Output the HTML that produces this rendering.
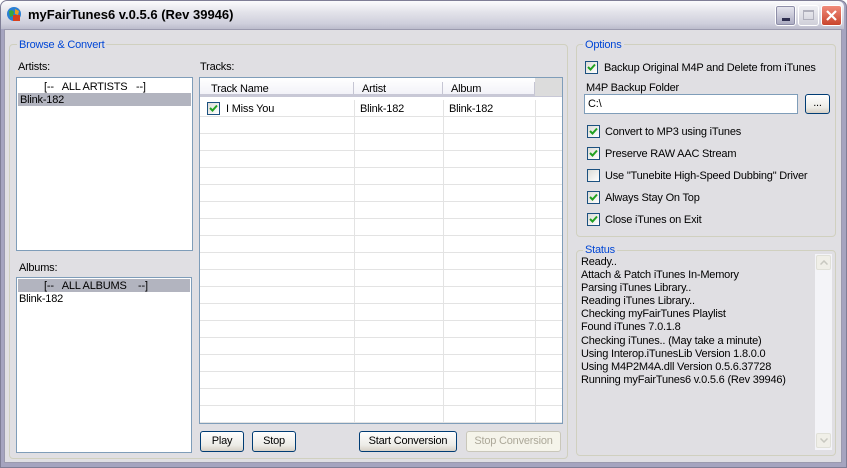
<!DOCTYPE html>
<html><head><meta charset="utf-8">
<style>
*{box-sizing:border-box;margin:0;padding:0}
body{width:847px;height:468px;overflow:hidden;background:#fff;font-family:"Liberation Sans",sans-serif;font-size:11px;letter-spacing:-0.2px;color:#000;position:relative}
.a{position:absolute}
#win{left:0;top:0;width:847px;height:468px;background:#a5a4bf;border-radius:7px 7px 0 0;border:1px solid #7f7e96}
#title{left:1px;top:1px;width:843px;height:28px;border-radius:6px 6px 0 0;background:linear-gradient(#fbfbfd,#e3e3ea 40%,#cfcfdc 80%,#bcbccc)}
#client{left:4px;top:29px;width:838px;height:434px;background:#e0dfe3;border:1px solid #9b9aae}
.grp{border:1px solid #d0d0bf;border-radius:4px;background:transparent}
.leg{background:#e0dfe3;color:#0046d5;padding:0 2px;line-height:12px}
.lb{background:#fff;border:1px solid #7f9db9}
.sel{background:#b2b4bf}
.btn{border:1px solid #003c74;border-radius:3px;background:linear-gradient(#fff,#ecebe6 70%,#d6d0c5);text-align:center;line-height:18px}
.cb{width:13px;height:13px;border:1px solid #1c5180;background:linear-gradient(135deg,#dcdcd7,#fff)}
.cb svg{position:absolute;left:1px;top:1px}
.t{white-space:nowrap;line-height:13px}
</style></head><body>
<div id="win" class="a"></div>
<div id="title" class="a"></div>
<svg class="a" style="left:6px;top:6px" width="16" height="16"><circle cx="8" cy="8" r="7" fill="#2a7fd4"/><path d="M3 5 Q6 3 8 6 L7 10 L4 11Z" fill="#3aa83a"/><path d="M9 3 L13 5 L12 9 L9 8Z" fill="#e8a020"/><rect x="7" y="9" width="7" height="6" fill="#d8401c"/></svg>
<div class="a t" style="left:28px;top:8px;font-weight:bold;font-size:13px;letter-spacing:0;color:#000">myFairTunes6 v.0.5.6 (Rev 39946)</div>
<div class="a" style="left:775px;top:5px;width:21px;height:21px;border:1px solid #fff;border-radius:3px;background:linear-gradient(#e8e8f0,#a9a9c0);box-shadow:inset 0 0 0 1px #8e8ea8"><div class="a" style="left:6px;top:12px;width:8px;height:3px;background:#2e2e50"></div></div>
<div class="a" style="left:798px;top:5px;width:21px;height:21px;border:1px solid #fff;border-radius:3px;background:linear-gradient(#f0f0f4,#cfcfd9)"><div class="a" style="left:4px;top:4px;width:11px;height:10px;border:1px solid #b0b0bc;border-top-width:2px"></div></div>
<div class="a" style="left:821px;top:5px;width:21px;height:21px;border:1px solid #fff;border-radius:3px;background:linear-gradient(#f08b7a,#c9442d)"><svg class="a" style="left:4px;top:4px" width="11" height="11"><path d="M1 1L10 10M10 1L1 10" stroke="#fff" stroke-width="2.2"/></svg></div>
<div id="client" class="a"></div>

<div class="a grp" style="left:9px;top:44px;width:559px;height:415px"></div>
<div class="a leg t" style="left:17px;top:39px">Browse &amp; Convert</div>
<div class="a t" style="left:18px;top:61px">Artists:</div>
<div class="a lb" style="left:16px;top:77px;width:177px;height:174px"></div>
<div class="a t" style="left:44px;top:81px">[--&nbsp;&nbsp; ALL ARTISTS &nbsp;&nbsp;--]</div>
<div class="a sel" style="left:18px;top:93px;width:173px;height:13px"></div>
<div class="a t" style="left:20px;top:94px">Blink-182</div>
<div class="a t" style="left:19px;top:262px">Albums:</div>
<div class="a lb" style="left:16px;top:277px;width:176px;height:176px"></div>
<div class="a sel" style="left:18px;top:279px;width:172px;height:13px"></div>
<div class="a t" style="left:44px;top:280px">[--&nbsp;&nbsp; ALL ALBUMS &nbsp;&nbsp;&nbsp;--]</div>
<div class="a t" style="left:19px;top:293px">Blink-182</div>

<div class="a t" style="left:200px;top:61px">Tracks:</div>
<div class="a lb" style="left:199px;top:77px;width:364px;height:347px;overflow:hidden">
 <div class="a" style="left:0;top:0;width:362px;height:19px;background:linear-gradient(#fff,#f2f2f8);border-bottom:3px solid #c8c8d6"></div>
 <div class="a" style="left:335px;top:0;width:27px;height:18px;background:#dcdcdc"></div>
 <div class="a" style="left:153px;top:4px;width:1px;height:12px;background:#c5c5d3"></div>
 <div class="a" style="left:242px;top:4px;width:1px;height:12px;background:#c5c5d3"></div>
 <div class="a" style="left:334px;top:4px;width:1px;height:12px;background:#c5c5d3"></div>
 <div class="a t" style="left:11px;top:5px">Track Name</div>
 <div class="a t" style="left:162px;top:5px">Artist</div>
 <div class="a t" style="left:251px;top:5px">Album</div>
 <div class="a" style="left:0;top:22px;width:362px;height:330px;background:repeating-linear-gradient(to bottom,transparent 0,transparent 16px,#e3e3e3 16px,#e3e3e3 17px)"></div>
 <div class="a" style="left:154px;top:22px;width:1px;height:330px;background:#e3e3e3"></div>
 <div class="a" style="left:243px;top:22px;width:1px;height:330px;background:#e3e3e3"></div>
 <div class="a" style="left:335px;top:22px;width:1px;height:330px;background:#e3e3e3"></div>
 <div class="a cb" style="left:7px;top:24px"><svg width="9" height="9"><path d="M1 4L3.5 6.5L8 1.5" stroke="#21a121" stroke-width="2" fill="none"/></svg></div>
 <div class="a t" style="left:26px;top:25px">I Miss You</div>
 <div class="a t" style="left:160px;top:25px">Blink-182</div>
 <div class="a t" style="left:249px;top:25px">Blink-182</div>
</div>
<div class="a btn" style="left:200px;top:431px;width:44px;height:21px">Play</div>
<div class="a btn" style="left:252px;top:431px;width:44px;height:21px">Stop</div>
<div class="a btn" style="left:359px;top:431px;width:98px;height:21px">Start Conversion</div>
<div class="a btn" style="left:466px;top:431px;width:95px;height:21px;border-color:#c9c7ba;background:#f5f4ea;color:#aca899">Stop Conversion</div>

<div class="a grp" style="left:576px;top:44px;width:260px;height:193px"></div>
<div class="a leg t" style="left:583px;top:39px">Options</div>
<div class="a cb" style="left:585px;top:61px"><svg width="9" height="9"><path d="M1 4L3.5 6.5L8 1.5" stroke="#21a121" stroke-width="2" fill="none"/></svg></div>
<div class="a t" style="left:604px;top:62px">Backup Original M4P and Delete from iTunes</div>
<div class="a t" style="left:586px;top:82px">M4P Backup Folder</div>
<div class="a" style="left:584px;top:94px;width:214px;height:20px;background:#fff;border:1px solid #7f9db9"></div>
<div class="a t" style="left:588px;top:98px">C:\</div>
<div class="a btn" style="left:805px;top:94px;width:25px;height:20px;line-height:16px">...</div>
<div class="a cb" style="left:587px;top:125px"><svg width="9" height="9"><path d="M1 4L3.5 6.5L8 1.5" stroke="#21a121" stroke-width="2" fill="none"/></svg></div>
<div class="a t" style="left:605px;top:126px">Convert to MP3 using iTunes</div>
<div class="a cb" style="left:587px;top:147px"><svg width="9" height="9"><path d="M1 4L3.5 6.5L8 1.5" stroke="#21a121" stroke-width="2" fill="none"/></svg></div>
<div class="a t" style="left:605px;top:148px">Preserve RAW AAC Stream</div>
<div class="a cb" style="left:587px;top:169px"></div>
<div class="a t" style="left:605px;top:170px">Use "Tunebite High-Speed Dubbing" Driver</div>
<div class="a cb" style="left:587px;top:191px"><svg width="9" height="9"><path d="M1 4L3.5 6.5L8 1.5" stroke="#21a121" stroke-width="2" fill="none"/></svg></div>
<div class="a t" style="left:605px;top:192px">Always Stay On Top</div>
<div class="a cb" style="left:587px;top:213px"><svg width="9" height="9"><path d="M1 4L3.5 6.5L8 1.5" stroke="#21a121" stroke-width="2" fill="none"/></svg></div>
<div class="a t" style="left:605px;top:214px">Close iTunes on Exit</div>

<div class="a grp" style="left:576px;top:250px;width:260px;height:206px"></div>
<div class="a leg t" style="left:583px;top:244px">Status</div>
<div class="a" style="left:815px;top:254px;width:17px;height:196px;background:#f4f4f8"></div>
<div class="a" style="left:816px;top:255px;width:15px;height:15px;border:1px solid #e0e0d8;border-radius:2px;background:#f0efe8"><svg class="a" style="left:3px;top:4px" width="8" height="5"><path d="M0.5 4.5L4 1L7.5 4.5" stroke="#c8c8c0" stroke-width="1.5" fill="none"/></svg></div>
<div class="a" style="left:816px;top:433px;width:15px;height:15px;border:1px solid #e0e0d8;border-radius:2px;background:#f0efe8"><svg class="a" style="left:3px;top:4px" width="8" height="5"><path d="M0.5 0.5L4 4L7.5 0.5" stroke="#c8c8c0" stroke-width="1.5" fill="none"/></svg></div>
<div class="a" style="left:581px;top:256px;line-height:13.1px;white-space:nowrap">Ready..<br>Attach &amp; Patch iTunes In-Memory<br>Parsing iTunes Library..<br>Reading iTunes Library..<br>Checking myFairTunes Playlist<br>Found iTunes 7.0.1.8<br>Checking iTunes.. (May take a minute)<br>Using Interop.iTunesLib Version 1.8.0.0<br>Using M4P2M4A.dll Version 0.5.6.37728<br>Running myFairTunes6 v.0.5.6 (Rev 39946)</div>
</body></html>
